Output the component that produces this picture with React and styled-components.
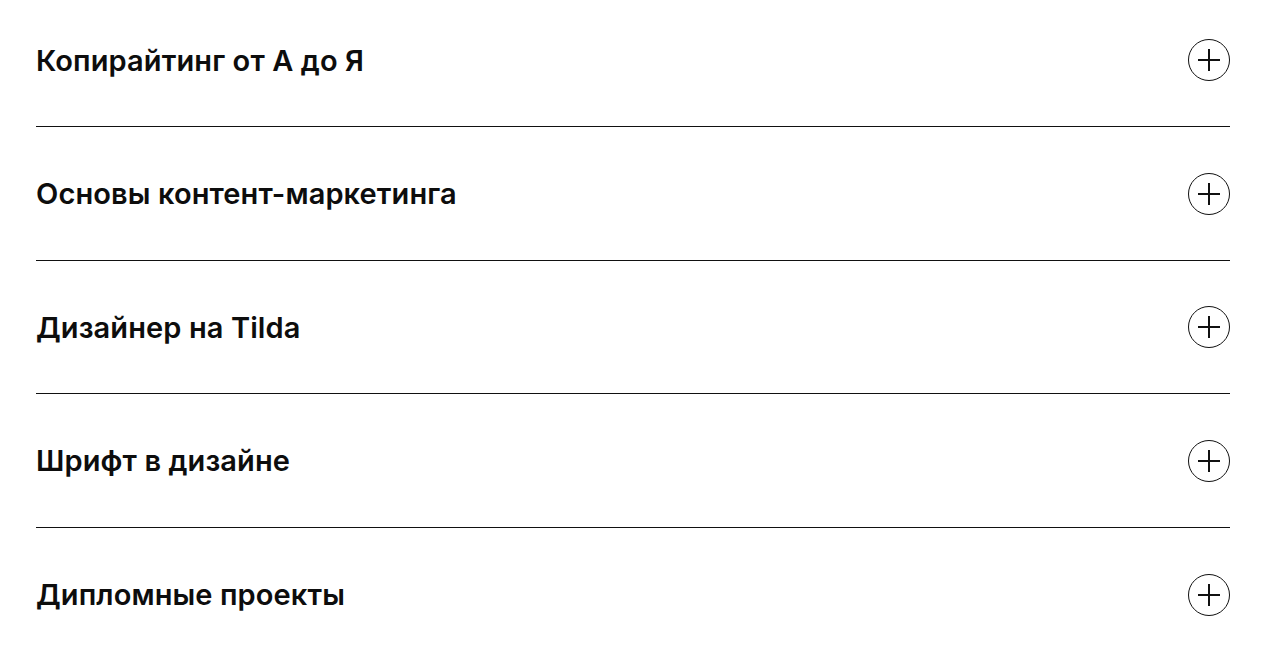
import React from "react";
import styled, { createGlobalStyle } from "styled-components";

const Global = createGlobalStyle`
  html, body { margin: 0; padding: 0; background: #fff; }
  body { font-family: Inter, "Noto Sans", sans-serif; color: #111; }
`;

const List = styled.div`
  padding: 0 38px 0 36px;
`;

const Item = styled.div`
  display: flex;
  align-items: center;
  justify-content: space-between;
  height: 42px;
  padding: 45.5px 0 45.17px;
  border-bottom: 1px solid #111;
  &:first-child { padding-top: 39px; }
  &:last-child { border-bottom: none; }
`;

const Title = styled.h3`
  margin: 0;
  font-family: Inter, "Noto Sans", sans-serif;
  font-size: 29px;
  font-weight: 600;
  line-height: 1;
  color: #0d0d0d;
  letter-spacing: 0.1px;
`;

const PlusButton = styled.button`
  width: 42px;
  height: 42px;
  padding: 0;
  border: 1px solid #111;
  border-radius: 50%;
  background: transparent;
  display: flex;
  align-items: center;
  justify-content: center;
  flex-shrink: 0;
`;

const items = [
  "Копирайтинг от А до Я",
  "Основы контент-маркетинга",
  "Дизайнер на Tilda",
  "Шрифт в дизайне",
  "Дипломные проекты",
];

export default function App() {
  return (
    <>
      <Global />
      <List>
        {items.map((t) => (
          <Item key={t}>
            <Title>{t}</Title>
            <PlusButton aria-label="Открыть">
              <svg width="24" height="24" viewBox="0 0 24 24">
                <path d="M12 1v22M1 12h22" stroke="#111" strokeWidth="2" fill="none" />
              </svg>
            </PlusButton>
          </Item>
        ))}
      </List>
    </>
  );
}
